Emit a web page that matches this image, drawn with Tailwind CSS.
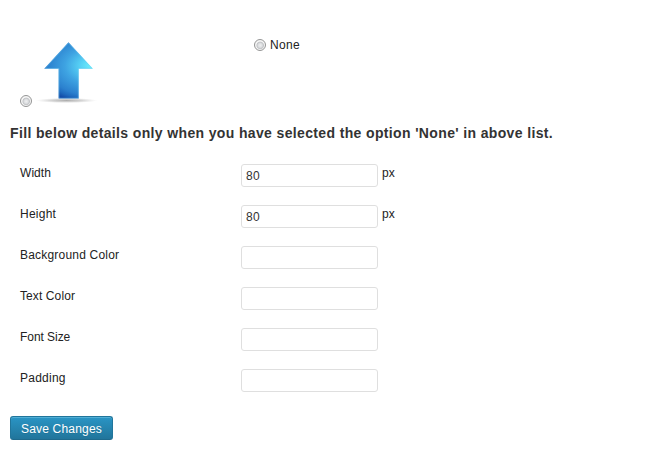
<!DOCTYPE html>
<html lang="en">
<head>
<meta charset="utf-8">
<title>Settings</title>
<script src="https://cdn.jsdelivr.net/npm/@tailwindcss/browser@4"></script>
</head>
<body class="bg-white font-['Liberation_Sans',Arial,sans-serif] text-xs text-[#222]">
<form class="flex w-[645px] flex-col px-2.5 pt-[38px]">
  <div class="flex h-[72px] pl-2.5">
    <label class="flex w-[234px] items-end pb-[3px]">
      <input type="radio" name="icon" aria-label="Arrow" class="size-3 shrink-0 appearance-none rounded-full border border-[#949595] bg-[radial-gradient(circle_at_52%_54%,#eeeff0_0px,#dddfe1_2px,#c2c4c7_3.3px,#f6f6f6_4.2px)]">
      <svg class="mb-px ml-1 h-[68px] w-[66px]" viewBox="36 38 66 68">
        <defs>
          <radialGradient id="blue" gradientUnits="userSpaceOnUse" cx="0" cy="0" r="58" gradientTransform="translate(94 66) scale(1 .64)">
            <stop offset="0" stop-color="#74f6fd"/><stop offset=".25" stop-color="#55cff4"/><stop offset=".5" stop-color="#3ea3e2"/><stop offset=".8" stop-color="#2b80ce"/><stop offset=".9" stop-color="#1f6bbf"/><stop offset="1" stop-color="#134ca8"/>
          </radialGradient>
          <radialGradient id="shade"><stop offset="0" stop-color="#999" stop-opacity=".8"/><stop offset=".5" stop-color="#aaa" stop-opacity=".5"/><stop offset="1" stop-color="#ccc" stop-opacity="0"/></radialGradient>
        </defs>
        <ellipse cx="66.500" cy="100.500" rx="31" ry="2.600" fill="url(#shade)"/>
        <path d="M68.500 42.300 93 68.800H78.700V98.500H58.600V68.800H44.200Z" fill="url(#blue)"/>
        <path d="M68.500 43 92 68.400H78.300V98.200H59V68.400H45.200Z" fill="none" stroke="#70c8ef" stroke-opacity=".5" stroke-width=".8"/>
      </svg>
    </label>
    <label class="flex h-[14px] items-center gap-1">
      <input type="radio" name="icon" class="size-3 appearance-none rounded-full border border-[#949595] bg-[radial-gradient(circle_at_52%_54%,#eeeff0_0px,#dddfe1_2px,#c2c4c7_3.3px,#f6f6f6_4.2px)]">
      <span class="tracking-[0.3px]">None</span>
    </label>
  </div>
  <h4 class="mt-[13px] h-5 text-sm leading-5 font-bold tracking-[0.36px] whitespace-nowrap text-[#333]">Fill below details only when you have selected the option 'None' in above list.</h4>
  <div class="mt-[21px] flex flex-col gap-[18px] pl-2.5">
    <div class="flex h-[23px]"><label for="w" class="w-[221px] leading-[18px] tracking-[0.05px]">Width</label><input id="w" value="80" class="h-[23px] w-[137px] rounded-[3px] border border-[#dfdfdf] px-1 tracking-[0.3px] text-[#333]"><span class="ml-1 leading-[18px]">px</span></div>
    <div class="flex h-[23px]"><label for="h" class="w-[221px] leading-[18px] tracking-[0.25px]">Height</label><input id="h" value="80" class="h-[23px] w-[137px] rounded-[3px] border border-[#dfdfdf] px-1 tracking-[0.3px] text-[#333]"><span class="ml-1 leading-[18px]">px</span></div>
    <div class="flex h-[23px]"><label for="b" class="w-[221px] leading-[18px] tracking-[0.2px]">Background Color</label><input id="b" class="h-[23px] w-[137px] rounded-[3px] border border-[#dfdfdf] px-1"></div>
    <div class="flex h-[23px]"><label for="t" class="w-[221px] leading-[18px] tracking-[0.1px]">Text Color</label><input id="t" class="h-[23px] w-[137px] rounded-[3px] border border-[#dfdfdf] px-1"></div>
    <div class="flex h-[23px]"><label for="f" class="w-[221px] leading-[18px] tracking-[-0.05px]">Font Size</label><input id="f" class="h-[23px] w-[137px] rounded-[3px] border border-[#dfdfdf] px-1"></div>
    <div class="flex h-[23px]"><label for="p" class="w-[221px] leading-[18px] tracking-[0.25px]">Padding</label><input id="p" class="h-[23px] w-[137px] rounded-[3px] border border-[#dfdfdf] px-1"></div>
  </div>
  <button type="button" class="mt-[24px] h-6 w-[103px] rounded-[3px] border border-[#21759b] border-b-[#1e6a8d] bg-linear-to-b from-[#2a95c5] to-[#21759b] pt-px text-center leading-[22px] tracking-[0.2px] whitespace-nowrap text-white inset-shadow-[0_1px_0_rgba(120,200,230,0.5)] text-shadow-[0_1px_0_rgba(0,0,0,0.1)]">Save Changes</button>
</form>
</body>
</html>
